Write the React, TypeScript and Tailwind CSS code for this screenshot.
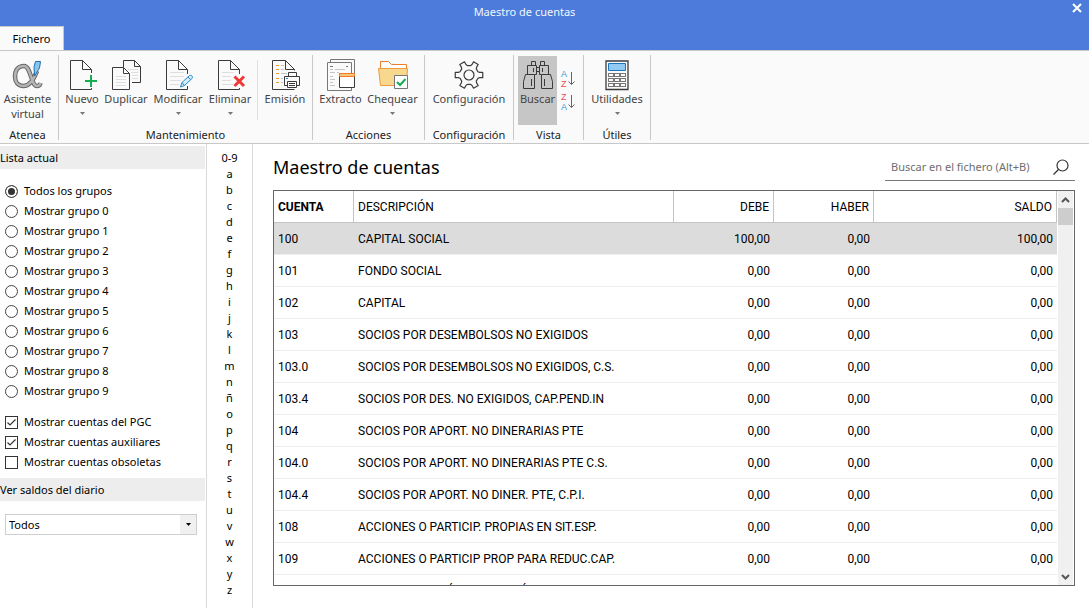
import { useState, type ReactNode } from "react";
import clsx from "clsx";

const INK = "#3b3b3b";

const groups = ["Todos los grupos", ...Array.from({ length: 10 }, (_, i) => `Mostrar grupo ${i}`)];

const letters = ["0-9", ..."abcdefghijklmnñopqrstuvwxyz"];

const accounts = [
    { code: "100", name: "CAPITAL SOCIAL", debit: "100,00", credit: "0,00", balance: "100,00" },
    { code: "101", name: "FONDO SOCIAL", debit: "0,00", credit: "0,00", balance: "0,00" },
    { code: "102", name: "CAPITAL", debit: "0,00", credit: "0,00", balance: "0,00" },
    { code: "103", name: "SOCIOS POR DESEMBOLSOS NO EXIGIDOS", debit: "0,00", credit: "0,00", balance: "0,00" },
    { code: "103.0", name: "SOCIOS POR DESEMBOLSOS NO EXIGIDOS, C.S.", debit: "0,00", credit: "0,00", balance: "0,00" },
    { code: "103.4", name: "SOCIOS POR DES. NO EXIGIDOS, CAP.PEND.IN", debit: "0,00", credit: "0,00", balance: "0,00" },
    { code: "104", name: "SOCIOS POR APORT. NO DINERARIAS PTE", debit: "0,00", credit: "0,00", balance: "0,00" },
    { code: "104.0", name: "SOCIOS POR APORT. NO DINERARIAS PTE C.S.", debit: "0,00", credit: "0,00", balance: "0,00" },
    { code: "104.4", name: "SOCIOS POR APORT. NO DINER. PTE, C.P.I.", debit: "0,00", credit: "0,00", balance: "0,00" },
    { code: "108", name: "ACCIONES O PARTICIP. PROPIAS EN SIT.ESP.", debit: "0,00", credit: "0,00", balance: "0,00" },
    { code: "109", name: "ACCIONES O PARTICIP PROP PARA REDUC.CAP.", debit: "0,00", credit: "0,00", balance: "0,00" },
    { code: "110", name: "PRIMA DE EMISIÓN O ASUNCIÓN", debit: "0,00", credit: "0,00", balance: "0,00" },
];

function Icon({ children }: { children: ReactNode }) {
    return (
        <svg viewBox="0 0 32 32" fill="none" stroke={INK} className="w-8 h-8 shrink-0" aria-hidden="true">
            {children}
        </svg>
    );
}

function AlphaIcon() {
    const d = "M25 12C22 20 18 27 11.500 27C6 27 3 23 3 17.500C3 11 6.500 7 12 7C19 7 19 27 25 27C27 27 28 26 28.500 24";
    return (
        <Icon>
            <path d={d} stroke="#666" strokeWidth="4.500" />
            <path d={d} stroke="#b4b4b4" strokeWidth="2.500" />
            <path d="M23.500 2.500H28.500L27.500 9L22.500 17L22 8Z" fill="#8cc4ea" stroke="#1f74b4" />
        </Icon>
    );
}

function NewIcon() {
    return (
        <Icon>
            <path d="M25.500 14V10.500L16.500 1.500H4.500V30.500H25.500V29M16.500 1.500V10.500H25.500" />
            <path d="M19 22H31M25 16V28" stroke="#14ad50" strokeWidth="2" />
        </Icon>
    );
}

function DuplicateIcon() {
    return (
        <Icon>
            <path d="M13.500 8V1.500H24.500L30.500 7.500V23.500H22M24.500 1.500V7.500H30.500" />
            <path d="M2.500 8.500H13.500L19.500 14.500V30.500H2.500ZM13.500 8.500V14.500H19.500" />
            <path d="M6 17.500H16M6 20.500H16M6 23.500H16M6 26.500H16M18 10.500H28M21 13.500H28M22 16.500H28M22 19.500H28" stroke="#dedede" />
        </Icon>
    );
}

function EditIcon() {
    return (
        <Icon>
            <path d="M8 13.500H22M8 17.500H22M8 21.500H19M8 25.500H17" stroke="#dedede" />
            <path d="M25.500 15V10.500L16.500 1.500H4.500V30.500H25.500V27M16.500 1.500V10.500H25.500" />
            <path d="M18.500 28L20 23.500L27.500 16.500C29 15.500 31.500 17.500 30 19.500L22.500 26.500ZM20 23.500L22.500 26.500M26 18L28.500 20.500" fill="#d5ecfa" stroke="#2589c9" />
        </Icon>
    );
}

function DeleteIcon() {
    return (
        <Icon>
            <path d="M8 13.500H20M8 17.500H17M8 21.500H17M8 25.500H19" stroke="#dedede" />
            <path d="M25.500 15V10.500L16.500 1.500H4.500V30.500H25.500V29M16.500 1.500V10.500H25.500" />
            <path d="M20.500 17.500L30 27M30 17.500L20.500 27" stroke="#ee3936" strokeWidth="3" />
        </Icon>
    );
}

function PrintIcon() {
    return (
        <Icon>
            <path d="M25.500 11.500V10.500L16.500 1.500H3.500V30.500H25.500M16.500 1.500V10.500H25.500" />
            <path d="M7 6.500H10M7 10.500H10M7 14.500H10M7 19.500H10M7 23.500H10" stroke="#f39a2c" />
            <path d="M12 6.500H15M12 10.500H15M12 14.500H18M12 19.500H14M12 23.500H14" stroke="#c4c4c4" />
            <path d="M19.500 17.500V13.500H27.500V17.500M18.500 26.500H15.500V17.500H30.500V26.500H27.500" fill="#fafafa" />
            <path d="M18.500 22.500H27.500V28.500H18.500ZM20 24.500H26M20 26.500H26" fill="#fff" />
            <path d="M17 19.500H19" stroke="#2589c9" />
        </Icon>
    );
}

function ExtractIcon() {
    return (
        <Icon>
            <path d="M5.500 3V0.500H29.500V14M2.500 3.500H26.500V14M2.500 3.500V31.500H26.500V29" stroke="#777" />
            <path d="M5 10.500H8M5 13.500H10M5 17.500H8M5 20.500H10M5 23.500H8M5 26.500H10M10 10.500H20M12 13.500H14" stroke="#c4c4c4" />
            <path d="M5 7.500H8M21 7.500H23" stroke="#777" />
            <path d="M14.500 14.500H29.500V28.500H14.500Z" fill="#fff" />
            <path d="M14.500 14.500H29.500V17.500H14.500Z" fill="#f9c27b" stroke="#ee7d2b" />
        </Icon>
    );
}

function CheckFolderIcon() {
    return (
        <Icon>
            <path d="M3.500 10V2.500H11.500L14.500 5.500H29.500V10" fill="#fff" stroke="#ee7d2b" />
            <path d="M1.500 9.500H30.500L29.500 26.500H3.500Z" fill="#f8d78f" stroke="#f09a3e" />
            <path d="M17.500 16.500H30.500V29.500H17.500Z" fill="#fff" stroke="#777" />
            <path d="M20 23L23 26L28.500 20" stroke="#14ad50" strokeWidth="2" />
        </Icon>
    );
}

function GearIcon() {
    const points: string[] = [];
    for (let tooth = 0; tooth < 6; tooth++) {
        for (const [offset, radius] of [[-20, 9.5], [-14, 11], [-11, 14], [11, 14], [14, 11], [20, 9.5]]) {
            const a = ((tooth * 60 + offset) * Math.PI) / 180;
            points.push(`${(16 + radius * Math.cos(a)).toFixed(2)},${(16 + radius * Math.sin(a)).toFixed(2)}`);
        }
    }
    return (
        <Icon>
            <polygon points={points.join(" ")} strokeWidth="1.200" strokeLinejoin="round" />
            <circle cx="16" cy="16" r="5" strokeWidth="1.200" />
        </Icon>
    );
}

function BinocularsIcon() {
    return (
        <Icon>
            <path d="M1.500 29.500V22.500L3.500 15.500H12.500V29.500ZM5.500 15.500V6.500H14.500V15.500H12.500M9.500 6.500V2.500H13.500V6.500M9.500 20V27M11.500 9V13" />
            <path d="M30.500 29.500V22.500L28.500 15.500H19.500V29.500ZM26.500 15.500V6.500H17.500V15.500H19.500M22.500 6.500V2.500H18.500V6.500M22.500 20V27M20.500 9V13" />
            <path d="M14.500 8.500H17.500M14.500 12.500H17.500" />
        </Icon>
    );
}

function CalculatorIcon() {
    return (
        <Icon>
            <path d="M5 2H27V30.500H5Z" strokeWidth="1.300" />
            <path d="M7.500 4.500H24.500V11.500H7.500Z" fill="#92caf3" stroke="#1b75bc" />
            {[14.5, 19.5, 24.5].map((y) =>
                [7.5, 13.5, 19.5].map((x) => <rect key={`${x}-${y}`} x={x} y={y} width="5" height="3" stroke="#777" />)
            )}
        </Icon>
    );
}

function SortIcon({ top, bottom }: { top: "A" | "Z"; bottom: "A" | "Z" }) {
    return (
        <svg viewBox="0 0 18 20" className="w-[18px] h-5 overflow-visible font-['Liberation_Sans',sans-serif]" aria-hidden="true">
            <text x="0" y="8" fontSize="9" fill={top === "A" ? "#3a95d2" : "#ee4d4d"}>{top}</text>
            <text x="0" y="18" fontSize="9" fill={bottom === "A" ? "#3a95d2" : "#ee4d4d"}>{bottom}</text>
            <path d="M10.500 3V15.500M7.500 12.500L10.500 15.500L13.500 12.500" fill="none" stroke="#666" />
        </svg>
    );
}

function CaretDown({ className }: { className?: string }) {
    return (
        <svg viewBox="0 0 5 3" className={clsx("w-[5px] h-[3px]", className)} aria-hidden="true">
            <path d="M0 0H5L2.500 3Z" fill="currentColor" />
        </svg>
    );
}

interface RibbonButtonProps {
    icon: ReactNode;
    label: string;
    menu?: boolean;
    className?: string;
}

function RibbonButton({ icon, label, menu, className }: RibbonButtonProps) {
    return (
        <button type="button" className={clsx("flex flex-col items-center pt-[3px] h-[69px] shrink-0 text-[#444]", className)}>
            {icon}
            <span className="leading-[15px]">{label}</span>
            {menu && <CaretDown className="mt-[6px] text-[#777]" />}
        </button>
    );
}

function RibbonGroup({ title, className, children }: { title: string; className: string; children: ReactNode }) {
    return (
        <section className={clsx("flex flex-col shrink-0 border-r border-[#c8c8c8] pt-px h-[85px]", className)}>
            <div className="flex justify-center">{children}</div>
            <h2 className="mt-[2px] text-center leading-[15px] text-[#222]">{title}</h2>
        </section>
    );
}

function Ribbon() {
    return (
        <div className="flex items-start bg-[#fafafa] border-y border-[#c8c8c8] pt-1 h-[94px] shrink-0 overflow-hidden">
            <RibbonGroup title="Atenea" className="w-[59px] pr-[3px]">
                <RibbonButton icon={<AlphaIcon />} label="Asistente virtual" className="w-14" />
            </RibbonGroup>
            <RibbonGroup title="Mantenimiento" className="w-[254px]">
                <RibbonButton icon={<NewIcon />} label="Nuevo" menu className="w-10" />
                <RibbonButton icon={<DuplicateIcon />} label="Duplicar" className="w-12" />
                <RibbonButton icon={<EditIcon />} label="Modificar" menu className="w-14" />
                <RibbonButton icon={<DeleteIcon />} label="Eliminar" menu className="w-12" />
                <div className="w-px h-15 mt-1 mx-[3px] bg-[#e0e0e0]" />
                <RibbonButton icon={<PrintIcon />} label="Emisión" className="w-12" />
            </RibbonGroup>
            <RibbonGroup title="Acciones" className="w-[112px]">
                <RibbonButton icon={<ExtractIcon />} label="Extracto" className="w-12" />
                <RibbonButton icon={<CheckFolderIcon />} label="Chequear" menu className="w-14" />
            </RibbonGroup>
            <RibbonGroup title="Configuración" className="w-[89px]">
                <RibbonButton icon={<GearIcon />} label="Configuración" className="w-20" />
            </RibbonGroup>
            <RibbonGroup title="Vista" className="w-[70px]">
                <RibbonButton icon={<BinocularsIcon />} label="Buscar" className="w-[39px] bg-[#c6c6c6]" />
                <div className="flex flex-col gap-[3px] pt-[13px] pl-1">
                    <button type="button" aria-label="Orden ascendente" className="flex">
                        <SortIcon top="A" bottom="Z" />
                    </button>
                    <button type="button" aria-label="Orden descendente" className="flex">
                        <SortIcon top="Z" bottom="A" />
                    </button>
                </div>
            </RibbonGroup>
            <RibbonGroup title="Útiles" className="w-[67px]">
                <RibbonButton icon={<CalculatorIcon />} label="Utilidades" menu className="w-15" />
            </RibbonGroup>
        </div>
    );
}

function Sidebar() {
    const [group, setGroup] = useState(0);

    return (
        <aside className="w-[207px] shrink-0 border-r border-[#d9d9d9] pt-[2px]">
            <h2 className="mr-px h-[23px] leading-[23px] bg-[#ededed]">Lista actual</h2>
            <div className="pl-[5px] pt-3">
                {groups.map((name, i) => (
                    <label key={name} className="flex items-center gap-[6px] h-5">
                        <input
                            type="radio"
                            name="grupo"
                            checked={group === i}
                            onChange={() => setGroup(i)}
                            className="appearance-none w-[13px] h-[13px] rounded-full border border-[#444] bg-white checked:bg-[#333] checked:shadow-[inset_0_0_0_2px_#fff]"
                        />
                        {name}
                    </label>
                ))}
            </div>
            <div className="pl-[5px] pt-[11px] pb-[6px]">
                <CheckOption label="Mostrar cuentas del PGC" defaultChecked />
                <CheckOption label="Mostrar cuentas auxiliares" defaultChecked />
                <CheckOption label="Mostrar cuentas obsoletas" />
            </div>
            <h2 className="mr-px h-[23px] leading-[23px] bg-[#ededed]">
                <label htmlFor="diario">Ver saldos del diario</label>
            </h2>
            <div className="grid mt-[13px] ml-[5px] mr-[9px]">
                <select
                    id="diario"
                    className="col-start-1 row-start-1 appearance-none w-full h-[21px] pl-[3px] bg-white border border-[#cfcfcf]"
                >
                    <option>Todos</option>
                </select>
                <span className="col-start-1 row-start-1 justify-self-end self-center flex items-center justify-center w-4 h-[19px] mr-px bg-[#f0f0f0] pointer-events-none">
                    <CaretDown />
                </span>
            </div>
        </aside>
    );
}

function CheckOption({ label, defaultChecked }: { label: string; defaultChecked?: boolean }) {
    return (
        <label className="flex items-center gap-[6px] h-5">
            <span className="grid">
                <input
                    type="checkbox"
                    defaultChecked={defaultChecked}
                    className="peer col-start-1 row-start-1 appearance-none w-[13px] h-[13px] border border-[#333] bg-white"
                />
                <svg
                    viewBox="0 0 13 13"
                    fill="none"
                    stroke="#333"
                    strokeWidth="1.200"
                    className="col-start-1 row-start-1 w-[13px] h-[13px] invisible peer-checked:visible pointer-events-none"
                >
                    <path d="M2.500 6.500L5 9L10.500 3.500" />
                </svg>
            </span>
            {label}
        </label>
    );
}

function AccountTable() {
    return (
        <table className="table-fixed w-full border-separate border-spacing-0 font-[Roboto,sans-serif] text-[12px] text-left">
            <colgroup>
                <col className="w-20" />
                <col />
                <col className="w-[100px]" />
                <col className="w-[100px]" />
                <col className="w-[183px]" />
            </colgroup>
            <thead>
                <tr className="h-8 [&>th]:border-r [&>th]:border-b [&>th]:border-[#c4c4c4] [&>th]:px-1 [&>th]:whitespace-nowrap">
                    <th className="font-bold">CUENTA</th>
                    <th className="font-normal">DESCRIPCIÓN</th>
                    <th className="font-normal text-right">DEBE</th>
                    <th className="font-normal text-right">HABER</th>
                    <th className="font-normal text-right">SALDO</th>
                </tr>
            </thead>
            <tbody>
                {accounts.map((a, i) => (
                    <tr
                        key={a.code}
                        className={clsx(
                            "h-8 [&>td]:border-b [&>td]:border-[#ededed] [&>td]:px-1 [&>td]:whitespace-nowrap",
                            i === 0 && "bg-[#dcdcdc]"
                        )}
                    >
                        <td>{a.code}</td>
                        <td>{a.name}</td>
                        <td className="text-right">{a.debit}</td>
                        <td className="text-right">{a.credit}</td>
                        <td className="text-right">{a.balance}</td>
                    </tr>
                ))}
            </tbody>
        </table>
    );
}

function Scrollbar() {
    return (
        <div className="flex flex-col w-[15px] shrink-0 mx-px bg-[#f0f0f0]">
            <button type="button" aria-label="Subir" className="flex items-center justify-center h-[17px]">
                <svg viewBox="0 0 9 6" className="w-[9px] h-[6px]" fill="none" stroke="#555" strokeWidth="2">
                    <path d="M1 5L4.500 1.500L8 5" />
                </svg>
            </button>
            <div className="h-[17px] bg-[#cdcdcd]" />
            <div className="flex-1" />
            <button type="button" aria-label="Bajar" className="flex items-center justify-center h-[17px]">
                <svg viewBox="0 0 9 6" className="w-[9px] h-[6px]" fill="none" stroke="#555" strokeWidth="2">
                    <path d="M1 1L4.500 4.500L8 1" />
                </svg>
            </button>
        </div>
    );
}

export default function App() {
    return (
        <div className="flex flex-col h-screen bg-white text-black font-['Noto_Sans','Open_Sans',sans-serif] text-[11px] leading-4">
            <header className="bg-[#4c7bdb] shrink-0">
                <div className="flex items-start h-[26px]">
                    <h1 className="flex-1 text-center text-[#f2f5fc] leading-6">Maestro de cuentas</h1>
                    <button type="button" aria-label="Cerrar" className="flex justify-center w-6 ml-4 pt-[3px]">
                        <svg viewBox="0 0 10 10" className="w-[10px] h-[10px]" stroke="#fff" strokeWidth="2">
                            <path d="M1 1L9 9M9 1L1 9" />
                        </svg>
                    </button>
                </div>
                <nav className="flex">
                    <button type="button" className="w-16 h-6 bg-[#fafafa] border-t border-r border-[#c8c8c8]">
                        Fichero
                    </button>
                </nav>
            </header>

            <Ribbon />

            <div className="flex flex-1 min-h-0">
                <Sidebar />

                <nav className="flex flex-col items-center w-[46px] shrink-0 border-r border-[#d9d9d9] pt-[6px]">
                    {letters.map((letter) => (
                        <button key={letter} type="button" className="w-full h-4 leading-4">
                            {letter}
                        </button>
                    ))}
                </nav>

                <main className="flex flex-col flex-1 min-w-0 pl-5 pr-[14px] pt-[10px] pb-[22px]">
                    <div className="flex items-start justify-between h-9">
                        <h2 className="text-[18px] leading-[26px]">Maestro de cuentas</h2>
                        <label className="flex items-center w-[190px] h-[27px] px-[6px] border-b border-[#777]">
                            <input
                                type="text"
                                aria-label="Buscar en el fichero"
                                placeholder="Buscar en el fichero (Alt+B)"
                                className="flex-1 min-w-0 outline-none placeholder:text-[#6e6e6e]"
                            />
                            <svg viewBox="0 0 16 16" className="w-4 h-4" fill="none" stroke="#333" strokeWidth="1.200">
                                <circle cx="9.500" cy="6.500" r="5.500" />
                                <path d="M5.500 10.500L0.500 15.500" />
                            </svg>
                        </label>
                    </div>
                    <div className="flex flex-1 min-h-0 border border-[#666] overflow-hidden">
                        <div className="flex-1 min-w-0 overflow-hidden">
                            <AccountTable />
                        </div>
                        <Scrollbar />
                    </div>
                </main>
            </div>
        </div>
    );
}
